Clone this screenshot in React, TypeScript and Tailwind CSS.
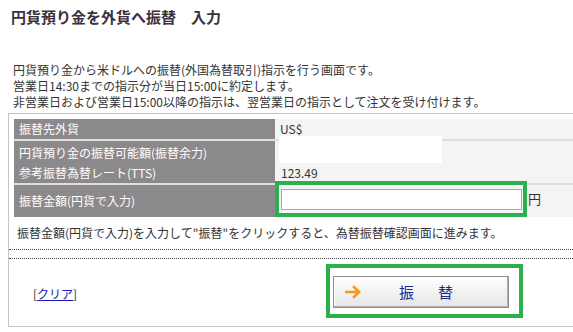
const jp = "font-['Noto_Sans_CJK_JP',sans-serif]";

function LabelRow({ label, children, tall }: { label: string; children?: React.ReactNode; tall?: boolean }) {
  return (
    <div className={`grid grid-cols-[261px_1fr] ${tall ? "h-[31px]" : "h-[22px] border-b-2 border-[#dedede]"}`}>
      <div className="bg-[#8b898b] text-white pl-[5px] flex items-center">{label}</div>
      <div className="bg-[#f4f4f4] flex items-center">{children}</div>
    </div>
  );
}

function ArrowIcon() {
  return (
    <svg width="17" height="14" viewBox="0 0 17 14">
      <path d="M1 7h13M9 2l5 5-5 5" fill="none" stroke="#f39a1e" strokeWidth="2.6" strokeLinecap="square" />
    </svg>
  );
}

export default function App() {
  return (
    <div className={`w-[573px] h-[332px] overflow-hidden bg-white text-[#333] ${jp}`}>
      <h1 className="pl-[11px] pt-[7px] text-[15px] leading-[20px] font-bold text-[#3a3040]">
        円貨預り金を外貨へ振替　入力
      </h1>

      <div className="mt-[35px] pl-[13px] text-[12px] leading-[16px]">
        <p>円貨預り金から米ドルへの振替(外国為替取引)指示を行う画面です。</p>
        <p>営業日14:30までの指示分が当日15:00に約定します。</p>
        <p>非営業日および営業日15:00以降の指示は、翌営業日の指示として注文を受け付けます。</p>
      </div>

      <div className="mt-[3px] ml-[8px] border-t border-l border-b border-[#c4c4c4] text-[12px] leading-[16px]">
        <div className="pl-[5px] pt-[5px]">
          <LabelRow label="振替先外貨">
            <span className="pl-[5px]">US$</span>
          </LabelRow>
          <LabelRow label="円貨預り金の振替可能額(振替余力)">
            <div className="ml-[4px] -mt-[5px] w-[163px] h-[28px] bg-white" />
          </LabelRow>
          <LabelRow label="参考振替為替レート(TTS)">
            <span className="pl-[6px]">123.49</span>
          </LabelRow>
          <LabelRow label="振替金額(円貨で入力)" tall>
            <div className="flex items-start self-start">
              <div className="-mt-[4px] h-[36px] w-[252px] border-4 border-[#2bb04c] bg-[#f4f4f4]">
                <input
                  type="text"
                  className="ml-[2px] mt-[4px] w-[241px] h-[21px] bg-white border border-[#a8a8a8] outline-none"
                />
              </div>
              <span className="ml-[1px] mt-[6px] text-[13px]">円</span>
            </div>
          </LabelRow>
        </div>

        <p className="pl-[8px] mt-[9px] pb-[8px] border-b border-dotted border-[#444]">
          振替金額(円貨で入力)を入力して"振替"をクリックすると、為替振替確認画面に進みます。
        </p>
        <div className="h-[9px] border-b border-dotted border-[#444]" />

        <div className="flex items-start pt-[5px] h-[67px]">
          <div className="w-[317px] pl-[24px] mt-[22px] text-[12px]">
            [<a href="#" className="text-[#1a1aa8] underline">クリア</a>]
          </div>
          <div className="w-[197px] h-[54px] border-4 border-[#2bb04c]">
            <button className="ml-[3px] mt-[8px] w-[176px] h-[32px] flex items-center border border-[#8e8e8e] bg-gradient-to-b from-white to-[#e6e6e6] shadow-[inset_-1px_-1px_0_#b0b0b0,inset_1px_1px_0_#fff]">
              <span className="ml-[11px] flex"><ArrowIcon /></span>
              <span className="ml-[37px] text-[15px] text-[#1c2a8c] tracking-[24px]">振替</span>
            </button>
          </div>
        </div>
      </div>
    </div>
  );
}
